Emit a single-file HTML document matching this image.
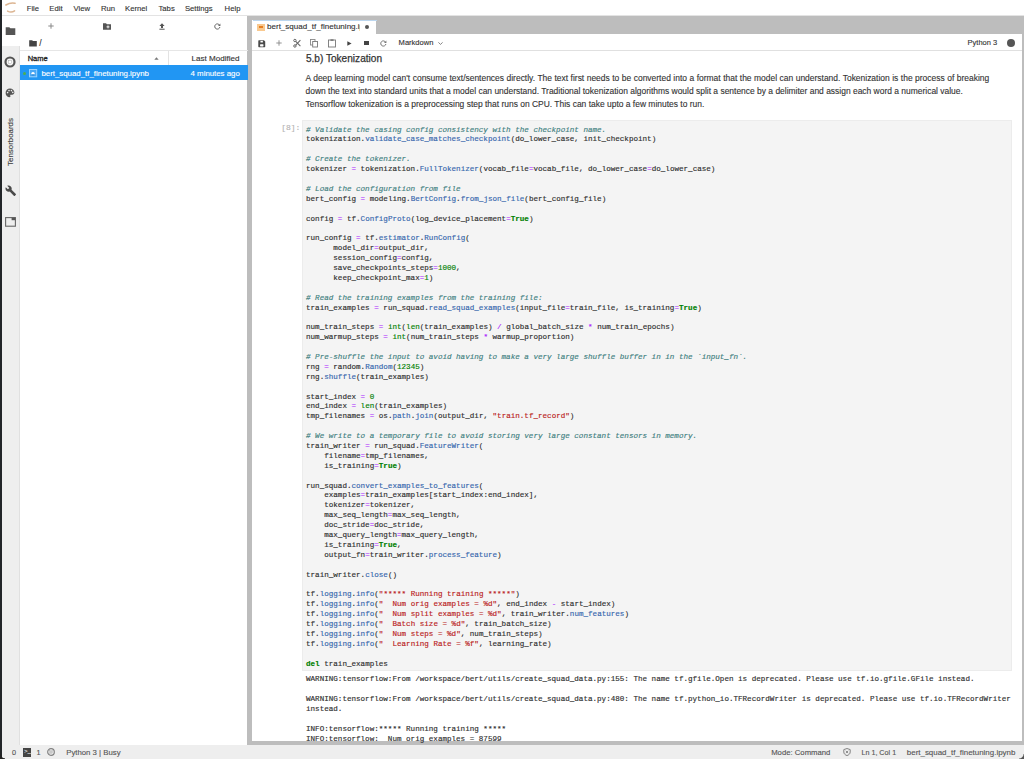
<!DOCTYPE html>
<html><head><meta charset="utf-8">
<style>
*{margin:0;padding:0;box-sizing:border-box}
html,body{width:1024px;height:759px;overflow:hidden;background:#fff;font-family:"Liberation Sans",sans-serif;color:#333}
.a{position:absolute}
svg{overflow:visible}
.t{position:absolute;white-space:nowrap;line-height:1;-webkit-text-stroke:0.12px currentColor}
#menubar{left:0;top:0;width:1024px;height:16px;background:#fff;border-bottom:1px solid #e3e3e3}
.mi{font-size:7.7px;color:#333;top:5.3px}
#leftedge{left:0;top:0;width:1.7px;height:759px;background:#222528}
#sidebar{left:2px;top:16px;width:18px;height:729px;background:#eeeeee;border-right:1px solid #e0e0e0}
#sbactive{left:2px;top:16px;width:18px;height:30px;background:#fff}
#fb{left:20px;top:16px;width:227.3px;height:729px;background:#fff}
#split{left:247.3px;top:16px;width:4.5px;height:729px;background:#bdbdbd}
#tabbar{left:251.8px;top:15.7px;width:772.2px;height:18.2px;background:#bdbdbd}
#tab{left:251.8px;top:20.3px;width:124.5px;height:14px;background:#fff}
#toolbar{left:251.8px;top:33.9px;width:770.2px;height:17px;background:#fff;border-bottom:1px solid #e0e0e0}
#nb{left:251.8px;top:50.9px;width:770.2px;height:690.5px;background:#fff}
#rborder{left:1022px;top:33px;width:2px;height:712px;background:#bdbdbd}
#bborder{left:252px;top:741px;width:772px;height:4px;background:#bdbdbd}
#status{left:0;top:745px;width:1024px;height:14px;background:#eeeeee}
.st{font-size:7.4px;color:#555;top:749px}
pre.code{position:absolute;font-family:"Liberation Mono",monospace;font-size:7.58px;line-height:9.89px;color:#2e2e2e;-webkit-text-stroke:0.15px currentColor}
.cm{color:#408080;font-style:italic}
.p{color:#3566ad}
.o{color:#aa22ff}
.k{color:#008000;font-weight:bold}
.n{color:#008000}
.s{color:#ba2121}
.b{color:#008000}
</style></head><body>
<div id="menubar" class="a"></div>
<div id="sidebar" class="a"></div>
<div id="sbactive" class="a"></div>
<div id="fb" class="a"></div>
<div id="split" class="a"></div>
<div id="tabbar" class="a"></div>
<div id="tab" class="a"></div>
<div id="toolbar" class="a"></div>
<div id="nb" class="a"></div>
<div id="rborder" class="a"></div>
<div id="bborder" class="a"></div>
<div id="status" class="a"></div>
<div id="leftedge" class="a"></div>

<!-- menu -->
<div class="t mi" style="left:26.7px">File</div>
<div class="t mi" style="left:49.3px">Edit</div>
<div class="t mi" style="left:73.6px">View</div>
<div class="t mi" style="left:100.9px">Run</div>
<div class="t mi" style="left:125px">Kernel</div>
<div class="t mi" style="left:158.5px">Tabs</div>
<div class="t mi" style="left:184.9px">Settings</div>
<div class="t mi" style="left:224.6px">Help</div>


<!-- logo -->
<svg class="a" style="left:4px;top:1px" width="14" height="14" viewBox="0 0 14 14">
<path d="M1.9 4 Q6.4 1.3 11 2.3" stroke="#dcb592" stroke-width="1.6" fill="none" stroke-linecap="round"/>
<path d="M3.6 10.1 Q7.2 12.1 10.6 9.9" stroke="#dcb592" stroke-width="1.5" fill="none" stroke-linecap="round"/>
</svg>

<!-- sidebar icons -->
<svg class="a" style="left:5px;top:26px" width="11" height="10" viewBox="0 0 11 10">
<path d="M0.7 1.2 h3.6 l1.1 1.1 h4.9 v6.8 h-9.6 z" fill="#555"/>
</svg>
<svg class="a" style="left:4.4px;top:55.9px" width="12" height="12" viewBox="0 0 12 12">
<circle cx="6" cy="6" r="4.5" stroke="#555" stroke-width="2.2" fill="#f4f4f4"/>
<rect x="4.5" y="4.5" width="3" height="3" fill="#fff" stroke="#999" stroke-width="0.4"/>
</svg>
<svg class="a" style="left:5.1px;top:87.8px" width="10" height="10" viewBox="0 0 10 10">
<path d="M5 0.6 C2.3 0.6 0.6 2.6 0.6 5 C0.6 7.4 2.4 9.2 4.6 9.2 C5.4 9.2 5.6 8.6 5.3 8 C5 7.4 5.3 6.8 6 6.8 H7.2 C8.4 6.8 9.4 5.8 9.4 4.6 C9.4 2.4 7.4 0.6 5 0.6 Z" fill="#555"/>
<circle cx="2.6" cy="4.6" r="0.8" fill="#eee"/><circle cx="4" cy="2.6" r="0.8" fill="#eee"/><circle cx="6.4" cy="2.6" r="0.8" fill="#eee"/><circle cx="7.8" cy="4.4" r="0.8" fill="#eee"/>
</svg>
<div class="t" style="left:11px;top:142px;font-size:7.9px;color:#3a3a3a;transform:translate(-50%,-50%) rotate(-90deg)">Tensorboards</div>
<svg class="a" style="left:4.6px;top:185px" width="11.5" height="11.5" viewBox="0 0 24 24">
<path d="M22.7 19l-9.1-9.1c.9-2.3.4-5-1.5-6.9-2-2-5-2.4-7.4-1.3L9 6 6 9 1.6 4.7C.4 7.1.9 10.1 2.9 12.1c1.9 1.9 4.6 2.4 6.9 1.5l9.1 9.1c.4.4 1 .4 1.4 0l2.3-2.3c.5-.4.5-1.1.1-1.4z" fill="#4a4a4a"/>
</svg>
<svg class="a" style="left:5px;top:217px" width="11" height="10" viewBox="0 0 11 10">
<rect x="0.6" y="0.6" width="9.8" height="8.6" fill="none" stroke="#666" stroke-width="1.1"/>
<rect x="6.6" y="0.6" width="3.8" height="2.6" fill="#555"/>
</svg>

<!-- file browser toolbar -->
<svg class="a" style="left:47.5px;top:23px" width="6" height="6" viewBox="0 0 6 6"><path d="M3 0.3 V5.7 M0.3 3 H5.7" stroke="#888" stroke-width="1"/></svg>
<svg class="a" style="left:102.5px;top:23px" width="8" height="7" viewBox="0 0 8 7">
<path d="M0 0.3 h3 l0.9 0.9 h4.1 v5.5 h-8 z" fill="#555"/>
<path d="M5 2.4 V5.4 M3.5 3.9 H6.5" stroke="#fff" stroke-width="0.9"/>
</svg>
<svg class="a" style="left:158.5px;top:22.5px" width="6" height="7" viewBox="0 0 6 7">
<path d="M3 0.3 L5.6 3 H4 V5 H2 V3 H0.4 Z" fill="#555"/><rect x="0.4" y="5.7" width="5.2" height="1" fill="#555"/>
</svg>
<svg class="a" style="left:213.5px;top:22.5px" width="7" height="7" viewBox="0 0 7 7">
<path d="M5.6 2.2 A2.6 2.6 0 1 0 5.9 4" stroke="#666" stroke-width="1" fill="none"/><path d="M6.4 0.6 V3 H4 Z" fill="#666"/>
</svg>

<!-- breadcrumb -->
<svg class="a" style="left:29px;top:40px" width="8" height="7" viewBox="0 0 8 7">
<path d="M0.2 0.2 h2.9 l0.9 0.9 h3.8 v5.5 h-7.6 z" fill="#444"/>
</svg>
<div class="t" style="left:39.2px;top:39.2px;font-size:8.6px;color:#333">/</div>
<div class="a" style="left:20px;top:50px;width:227.5px;height:1px;background:#e6e6e6"></div>

<!-- header -->
<div class="t" style="left:27.7px;top:55px;font-size:7.5px;color:#222;-webkit-text-stroke:0.3px #222">Name</div>
<svg class="a" style="left:154px;top:57px" width="5" height="3" viewBox="0 0 5 3"><path d="M0.3 2.7 L2.5 0.3 L4.7 2.7 Z" fill="#777"/></svg>
<div class="a" style="left:167.5px;top:51px;width:1px;height:14px;background:#e3e3e3"></div>
<div class="t" style="left:191.4px;top:54.5px;font-size:8.1px;color:#333">Last Modified</div>
<div class="a" style="left:20px;top:65px;width:227.5px;height:0.8px;background:#dcdcdc"></div>

<!-- selected row -->
<div class="a" style="left:20px;top:65px;width:227.5px;height:14.7px;background:#2196f3"></div>
<div class="a" style="left:23.2px;top:71.5px;width:3px;height:3px;border-radius:50%;background:#4caf50"></div>
<svg class="a" style="left:29px;top:68.7px" width="8" height="8.3" viewBox="0 0 8 8.3">
<rect x="0.5" y="0.5" width="7.2" height="7.3" fill="#4aa8f5" stroke="#9ad3ff" stroke-width="1"/>
<path d="M2.2 5.2 C2.2 2.4 5.8 2.4 5.8 5.2 Z" fill="#fff"/><rect x="2.6" y="5.6" width="2.8" height="0.9" fill="#2a7fc8"/>
</svg>
<div class="t" style="left:41.4px;top:69.5px;font-size:7.86px;color:#fff">bert_squad_tf_finetuning.ipynb</div>
<div class="t" style="left:190.6px;top:69.5px;font-size:7.83px;color:#fff">4 minutes ago</div>

<!-- tab -->
<div class="a" style="left:253px;top:19.5px;width:123.5px;height:1px;background:#bcd6ee"></div>
<div class="a" style="left:257px;top:23.5px;width:7.7px;height:7px;background:#f9c98f"></div>
<div class="a" style="left:258.5px;top:26.2px;width:4.7px;height:1.8px;background:#e67e22"></div>
<div class="a" style="left:267px;top:22px;width:93px;height:11px;overflow:hidden"><div class="t" style="left:0;top:1.2px;font-size:8.05px;color:#333">bert_squad_tf_finetuning.ipynb</div></div>
<div class="a" style="left:365px;top:25.4px;width:4px;height:4px;border-radius:50%;background:#555"></div>

<!-- notebook toolbar -->
<svg class="a" style="left:258px;top:39.5px" width="7.5" height="7.5" viewBox="0 0 8 8">
<path d="M1 0.3 H6.3 L7.7 1.7 V7 Q7.7 7.7 7 7.7 H1 Q0.3 7.7 0.3 7 V1 Q0.3 0.3 1 0.3 Z" fill="#4a4a4a"/><rect x="2.6" y="0.9" width="2.6" height="1.7" fill="#fff"/><rect x="2.2" y="4.4" width="3.6" height="2.4" rx="0.6" fill="#fff"/>
</svg>
<svg class="a" style="left:276.3px;top:40.2px" width="6" height="6" viewBox="0 0 6 6"><path d="M3 0.3 V5.7 M0.3 3 H5.7" stroke="#888" stroke-width="0.9"/></svg>
<svg class="a" style="left:292.5px;top:38.8px" width="8" height="8.5" viewBox="0 0 8 8.5">
<circle cx="1.9" cy="1.5" r="1.2" stroke="#666" stroke-width="1" fill="none"/><circle cx="1.9" cy="7" r="1.2" stroke="#666" stroke-width="1" fill="none"/>
<path d="M2.7 2.3 L7.4 7.2 M2.7 6.2 L7.4 1.2" stroke="#666" stroke-width="1.05"/>
</svg>
<svg class="a" style="left:310px;top:39px" width="8" height="8.5" viewBox="0 0 8 8.5">
<rect x="0.5" y="0.5" width="4.5" height="5.5" fill="none" stroke="#888" stroke-width="0.9"/>
<rect x="2.7" y="2.5" width="4.8" height="5.5" fill="#fff" stroke="#777" stroke-width="0.9"/>
</svg>
<svg class="a" style="left:327.6px;top:39px" width="8" height="8.5" viewBox="0 0 8 8.5">
<rect x="0.5" y="1" width="7" height="7" fill="none" stroke="#777" stroke-width="0.9"/>
<rect x="2.5" y="0.3" width="3" height="1.6" fill="#777"/>
</svg>
<svg class="a" style="left:347.4px;top:40.8px" width="5" height="5" viewBox="0 0 5 5"><path d="M0.3 0.2 L4.6 2.5 L0.3 4.8 Z" fill="#444"/></svg>
<div class="a" style="left:364.3px;top:40.8px;width:4.6px;height:4.6px;background:#444"></div>
<svg class="a" style="left:380.3px;top:39.5px" width="7" height="7" viewBox="0 0 7 7">
<path d="M5.6 2.2 A2.6 2.6 0 1 0 5.9 4" stroke="#777" stroke-width="1" fill="none"/><path d="M6.4 0.6 V3 H4 Z" fill="#777"/>
</svg>
<div class="t" style="left:398.6px;top:38.5px;font-size:7.55px;color:#333">Markdown</div>
<svg class="a" style="left:438px;top:41.5px" width="5" height="3" viewBox="0 0 5 3"><path d="M0.4 0.4 L2.5 2.4 L4.6 0.4" stroke="#666" stroke-width="0.8" fill="none"/></svg>
<div class="t" style="left:967.6px;top:38.5px;font-size:7.47px;color:#333">Python 3</div>
<div class="a" style="left:1006.9px;top:38.6px;width:8.2px;height:8.2px;border-radius:50%;background:#555"></div>

<!-- markdown -->
<div class="t" style="left:305.9px;top:53.5px;font-size:10.1px;color:#333;-webkit-text-stroke:0.25px #333">5.b) Tokenization</div>
<div class="t" style="left:305.5px;top:73.7px;font-size:8.46px;color:#333;word-spacing:0.16px">A deep learning model can&#39;t consume text/sentences directly. The text first needs to be converted into a format that the model can understand. Tokenization is the process of breaking</div>
<div class="t" style="left:305.5px;top:86.6px;font-size:8.46px;color:#333">down the text into standard units that a model can understand. Traditional tokenization algorithms would split a sentence by a delimiter and assign each word a numerical value.</div>
<div class="t" style="left:305.5px;top:99.5px;font-size:8.46px;color:#333">Tensorflow tokenization is a preprocessing step that runs on CPU. This can take upto a few minutes to run.</div>

<!-- status bar -->
<div class="t st" style="left:11.9px;font-size:7.3px;top:749.2px">0</div>
<div class="a" style="left:23px;top:748.4px;width:8.2px;height:8.4px;background:#444"></div>
<div class="t" style="left:24px;top:749px;font-size:6px;color:#ddd;font-family:'Liberation Mono',monospace">&gt;_</div>
<div class="t st" style="left:36.6px;font-size:7.3px;top:749.2px">1</div>
<svg class="a" style="left:47.2px;top:748.2px" width="8" height="8" viewBox="0 0 8 8"><circle cx="4" cy="4" r="3.3" stroke="#808080" stroke-width="1.2" fill="#f4f4f4"/><rect x="2.7" y="2.7" width="2.6" height="2.6" fill="#fff" stroke="#999" stroke-width="0.4"/><rect x="3.4" y="3.4" width="1.2" height="1.2" fill="#666"/></svg>
<div class="t st" style="left:66.2px;font-size:7.79px">Python 3 | Busy</div>
<div class="t st" style="left:771.2px;font-size:7.73px">Mode: Command</div>
<svg class="a" style="left:843px;top:748px" width="8" height="8" viewBox="0 0 8 8"><path d="M4 0.5 L7.2 1.6 V4 C7.2 5.8 5.8 7 4 7.6 C2.2 7 0.8 5.8 0.8 4 V1.6 Z" stroke="#777" stroke-width="0.9" fill="none"/><path d="M2.8 2.8 L5.2 5.2 M5.2 2.8 L2.8 5.2" stroke="#777" stroke-width="0.8"/></svg>
<div class="t st" style="left:861.4px;font-size:7.19px">Ln 1, Col 1</div>
<div class="t st" style="left:906.8px;font-size:7.95px">bert_squad_tf_finetuning.ipynb</div>

<!-- code cell -->
<div class="a" style="left:302.2px;top:120.3px;width:709.8px;height:550.3px;background:#f4f4f4;border:1px solid #ececec"></div>
<div class="t" style="left:281.2px;top:124px;font-family:'Liberation Mono',monospace;font-size:8px;color:#b3b3b3">[8]:</div>
<pre class="code" style="left:306px;top:125.5px"><span class="cm"># Validate the casing config consistency with the checkpoint name.</span>
tokenization.<span class="p">validate_case_matches_checkpoint</span>(do_lower_case, init_checkpoint)

<span class="cm"># Create the tokenizer.</span>
tokenizer <span class="o">=</span> tokenization.<span class="p">FullTokenizer</span>(vocab_file<span class="o">=</span>vocab_file, do_lower_case<span class="o">=</span>do_lower_case)

<span class="cm"># Load the configuration from file</span>
bert_config <span class="o">=</span> modeling.<span class="p">BertConfig</span>.<span class="p">from_json_file</span>(bert_config_file)

config <span class="o">=</span> tf.<span class="p">ConfigProto</span>(log_device_placement<span class="o">=</span><span class="k">True</span>)

run_config <span class="o">=</span> tf.<span class="p">estimator</span>.<span class="p">RunConfig</span>(
      model_dir<span class="o">=</span>output_dir,
      session_config<span class="o">=</span>config,
      save_checkpoints_steps<span class="o">=</span><span class="n">1000</span>,
      keep_checkpoint_max<span class="o">=</span><span class="n">1</span>)

<span class="cm"># Read the training examples from the training file:</span>
train_examples <span class="o">=</span> run_squad.<span class="p">read_squad_examples</span>(input_file<span class="o">=</span>train_file, is_training<span class="o">=</span><span class="k">True</span>)

num_train_steps <span class="o">=</span> <span class="b">int</span>(<span class="b">len</span>(train_examples) <span class="o">/</span> global_batch_size <span class="o">*</span> num_train_epochs)
num_warmup_steps <span class="o">=</span> <span class="b">int</span>(num_train_steps <span class="o">*</span> warmup_proportion)

<span class="cm"># Pre-shuffle the input to avoid having to make a very large shuffle buffer in in the `input_fn`.</span>
rng <span class="o">=</span> random.<span class="p">Random</span>(<span class="n">12345</span>)
rng.<span class="p">shuffle</span>(train_examples)

start_index <span class="o">=</span> <span class="n">0</span>
end_index <span class="o">=</span> <span class="b">len</span>(train_examples)
tmp_filenames <span class="o">=</span> os.<span class="p">path</span>.<span class="p">join</span>(output_dir, <span class="s">"train.tf_record"</span>)

<span class="cm"># We write to a temporary file to avoid storing very large constant tensors in memory.</span>
train_writer <span class="o">=</span> run_squad.<span class="p">FeatureWriter</span>(
    filename<span class="o">=</span>tmp_filenames,
    is_training<span class="o">=</span><span class="k">True</span>)

run_squad.<span class="p">convert_examples_to_features</span>(
    examples<span class="o">=</span>train_examples[start_index:end_index],
    tokenizer<span class="o">=</span>tokenizer,
    max_seq_length<span class="o">=</span>max_seq_length,
    doc_stride<span class="o">=</span>doc_stride,
    max_query_length<span class="o">=</span>max_query_length,
    is_training<span class="o">=</span><span class="k">True</span>,
    output_fn<span class="o">=</span>train_writer.<span class="p">process_feature</span>)

train_writer.<span class="p">close</span>()

tf.<span class="p">logging</span>.<span class="p">info</span>(<span class="s">"***** Running training *****"</span>)
tf.<span class="p">logging</span>.<span class="p">info</span>(<span class="s">"  Num orig examples = %d"</span>, end_index <span class="o">-</span> start_index)
tf.<span class="p">logging</span>.<span class="p">info</span>(<span class="s">"  Num split examples = %d"</span>, train_writer.<span class="p">num_features</span>)
tf.<span class="p">logging</span>.<span class="p">info</span>(<span class="s">"  Batch size = %d"</span>, train_batch_size)
tf.<span class="p">logging</span>.<span class="p">info</span>(<span class="s">"  Num steps = %d"</span>, num_train_steps)
tf.<span class="p">logging</span>.<span class="p">info</span>(<span class="s">"  Learning Rate = %f"</span>, learning_rate)

<span class="k">del</span> train_examples</pre>

<pre class="code" style="left:306px;top:675.3px">WARNING:tensorflow:From /workspace/bert/utils/create_squad_data.py:155: The name tf.gfile.Open is deprecated. Please use tf.io.gfile.GFile instead.

WARNING:tensorflow:From /workspace/bert/utils/create_squad_data.py:480: The name tf.python_io.TFRecordWriter is deprecated. Please use tf.io.TFRecordWriter
instead.

INFO:tensorflow:***** Running training *****
INFO:tensorflow:  Num orig examples = 87599</pre>

<div class="a" style="left:0;top:754px;width:5px;height:5px;background:radial-gradient(circle at 5px 0,rgba(0,0,0,0) 3.8px,#222 4.8px)"></div>
<div class="a" style="left:1019px;top:754px;width:5px;height:5px;background:radial-gradient(circle at 0 0,rgba(0,0,0,0) 4px,#555 5px)"></div>
</body></html>
